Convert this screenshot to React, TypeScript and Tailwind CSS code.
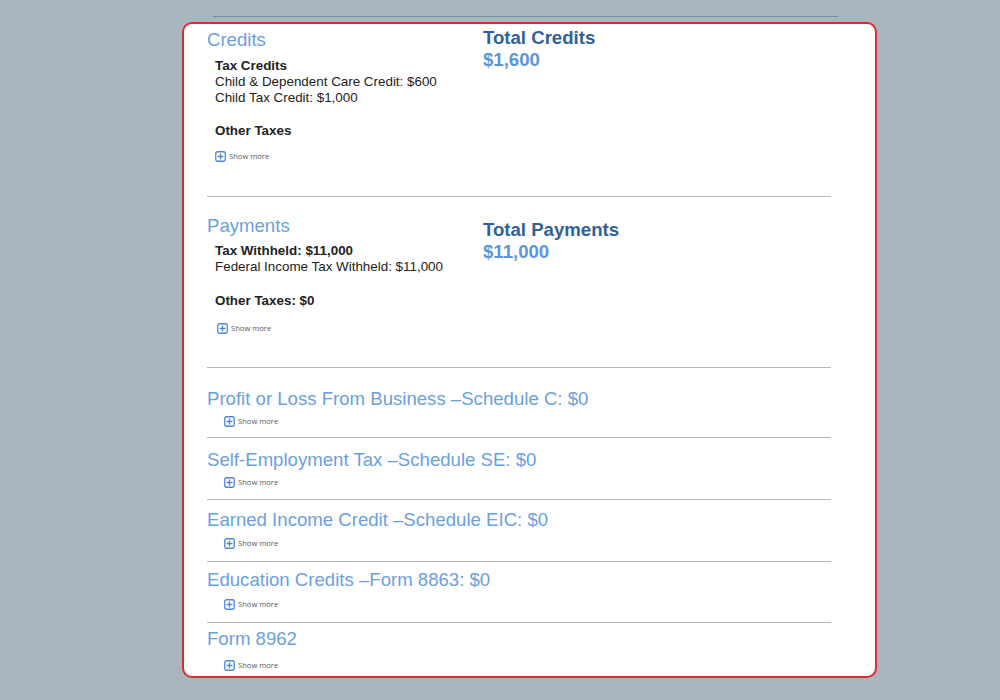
import React from 'react';

const ShowMore: React.FC<{ indent: string }> = ({ indent }) => (
  <div className={`flex items-center gap-[3px] h-[12px] ${indent}`}>
    <svg width="11" height="11" viewBox="0 0 11 11" className="shrink-0">
      <rect x="0.75" y="0.75" width="9.5" height="9.5" rx="1.8" fill="none" stroke="#4f86d6" strokeWidth="1.3" />
      <path d="M5.5 2.6v5.8M2.6 5.5h5.8" stroke="#4f86d6" strokeWidth="1.3" />
    </svg>
    <span className="text-[7.6px] leading-[12px] text-[#5a5a5a] font-['Open_Sans',sans-serif]">Show more</span>
  </div>
);

const schedules = [
  { title: 'Profit or Loss From Business –Schedule C: $0', pt: 'pt-[20px]', mt: 'mt-[5px]', pb: 'pb-[10px]' },
  { title: 'Self-Employment Tax –Schedule SE: $0', pt: 'pt-[11px]', mt: 'mt-[5px]', pb: 'pb-[11px]' },
  { title: 'Earned Income Credit –Schedule EIC: $0', pt: 'pt-[9px]', mt: 'mt-[6px]', pb: 'pb-[12px]' },
  { title: 'Education Credits –Form 8863: $0', pt: 'pt-[7px]', mt: 'mt-[7px]', pb: 'pb-[12px]' },
  { title: 'Form 8962', pt: 'pt-[5px]', mt: 'mt-[9px]', pb: 'pb-[4px]' },
];

const App: React.FC = () => {
  return (
    <div className="w-[1000px] h-[700px] bg-[#a9b6be] overflow-hidden font-['Liberation_Sans',Arial,sans-serif]">
      <div className="pt-[16px]">
        <div className="ml-[213px] w-[625px] h-px bg-[#7f8b93]" />
      </div>

      <div className="mt-[5px] ml-[182px] w-[695px] h-[656px] bg-white border-2 border-[#e8262e] rounded-[10px] pl-[23px] pr-[44px] overflow-hidden">
        {/* Credits */}
        <div className="flex h-[173px] border-b border-[#b8b8b8]">
          <div className="w-[276px] pt-[5px]">
            <div className="text-[18.6px] leading-[22px] text-[#6b9fe0]">Credits</div>
            <div className="pl-[8px] mt-[7px] text-[13.4px] leading-[16px] text-[#222]">
              <div className="font-bold">Tax Credits</div>
              <div>Child &amp; Dependent Care Credit: $600</div>
              <div>Child Tax Credit: $1,000</div>
              <div className="font-bold mt-[17px]">Other Taxes</div>
            </div>
            <div className="mt-[11px]">
              <ShowMore indent="pl-[8px]" />
            </div>
          </div>
          <div className="pt-[3px]">
            <div className="text-[18.6px] leading-[22px] font-bold text-[#2e6199]">Total Credits</div>
            <div className="text-[18.6px] leading-[22px] font-bold text-[#5b96dd]">$1,600</div>
          </div>
        </div>

        {/* Payments */}
        <div className="flex h-[171px] border-b border-[#b8b8b8]">
          <div className="w-[276px] pt-[18px]">
            <div className="text-[18.6px] leading-[22px] text-[#6b9fe0]">Payments</div>
            <div className="pl-[8px] mt-[6px] text-[13.4px] leading-[16px] text-[#222]">
              <div className="font-bold">Tax Withheld: $11,000</div>
              <div>Federal Income Tax Withheld: $11,000</div>
              <div className="font-bold mt-[18px]">Other Taxes: $0</div>
            </div>
            <div className="mt-[13px]">
              <ShowMore indent="pl-[10px]" />
            </div>
          </div>
          <div className="pt-[22px]">
            <div className="text-[18.6px] leading-[22px] font-bold text-[#2e6199]">Total Payments</div>
            <div className="text-[18.6px] leading-[22px] font-bold text-[#5b96dd]">$11,000</div>
          </div>
        </div>

        {/* Schedules */}
        {schedules.map((s, i) => (
          <div
            key={s.title}
            className={`${s.pt} ${s.pb} ${i < schedules.length - 1 ? 'border-b border-[#b8b8b8]' : ''}`}
          >
            <div className="text-[18.6px] leading-[22px] text-[#6b9fe0]">{s.title}</div>
            <div className={s.mt}>
              <ShowMore indent="pl-[17px]" />
            </div>
          </div>
        ))}
      </div>
    </div>
  );
};

export default App;
